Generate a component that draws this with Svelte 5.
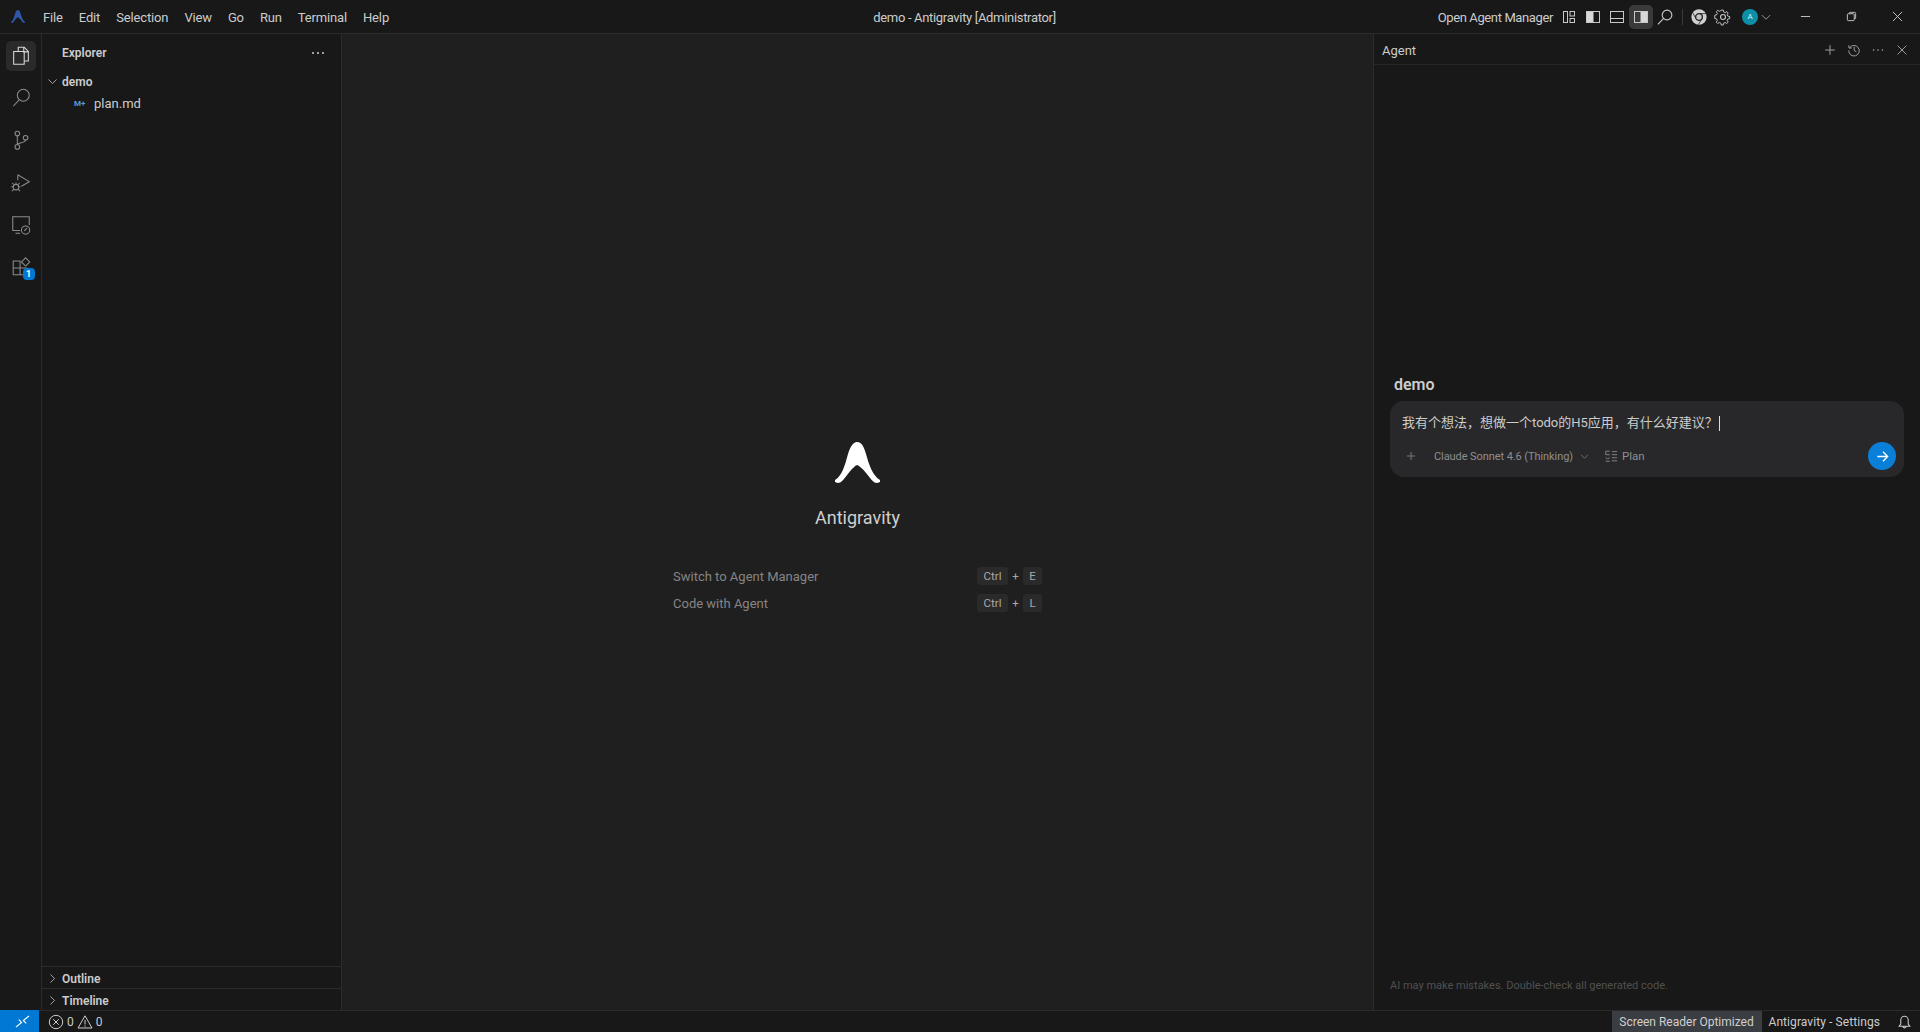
<script lang="ts">
    const menus = ["File", "Edit", "Selection", "View", "Go", "Run", "Terminal", "Help"];
    const shortcuts = [
        { label: "Switch to Agent Manager", key: "E" },
        { label: "Code with Agent", key: "L" },
    ];
    const logo =
        "M22 0C27 0 29 5 31 12C34 23 38 34 45 38C46 40 44 41 42 41C36 41 31 27 22 23C14 27 9 41 3 41C1 41 -1 40 0 38C7 34 10 23 13 12C15 5 18 0 22 0Z";
</script>

<div class="app">
    <header class="titlebar">
        <svg class="applogo" viewBox="0 0 45 41"><path d={logo} /></svg>
        <nav class="menu">
            {#each menus as m}
                <span>{m}</span>
            {/each}
        </nav>
        <div class="title">demo - Antigravity [Administrator]</div>
        <div class="actions">
            <span class="oam">Open Agent Manager</span>
            <div class="tb-icons">
                <span class="tb"><svg viewBox="0 0 16 16"><rect x="2.500" y="2.500" width="4" height="11" /><rect x="9" y="2.500" width="4.500" height="4.500" /><rect x="9" y="9.500" width="4.500" height="4" /></svg></span>
                <span class="tb"><svg viewBox="0 0 16 16"><rect x="1.500" y="2.500" width="13" height="11" /><rect class="fill" x="2" y="3" width="6.500" height="10" /></svg></span>
                <span class="tb"><svg viewBox="0 0 16 16"><rect x="1.500" y="2.500" width="13" height="11" /><path d="M2 9.500h12" /></svg></span>
                <span class="tb on"><svg viewBox="0 0 16 16"><rect x="1.500" y="2.500" width="13" height="11" /><rect class="fill" x="7.500" y="3" width="6.500" height="10" /></svg></span>
                <span class="tb"><svg class="big" viewBox="0 0 16 16"><circle cx="9.800" cy="6.200" r="4.300" /><path d="M6.800 9.300L1.700 14.600" /></svg></span>
            </div>
            <i class="sep"></i>
            <div class="tb-icons two">
                <span class="tb"><svg class="big" viewBox="0 0 16 16"><circle class="solid" cx="8" cy="8" r="6.800" /><path class="cut" d="M8 5h6.300M5.400 9.500L2.300 4M10.600 9.500L7.400 14.800" /><circle class="hole" cx="8" cy="8" r="3" /></svg></span>
                <span class="tb"><svg class="big" viewBox="0 0 16 16"><circle cx="8" cy="8" r="2.200" /><path d="M6.900 1.500h2.200l.4 2 1.600.7 1.700-1.100 1.500 1.500-1.100 1.700.7 1.600 2 .4v2.200l-2 .4-.7 1.600 1.100 1.700-1.500 1.500-1.700-1.100-1.600.7-.4 2H6.900l-.4-2-1.600-.7-1.700 1.100-1.500-1.500 1.100-1.700-.7-1.600-2-.4V6.900l2-.4.7-1.600L1.700 3.200 3.200 1.700l1.700 1.100 1.600-.7z" transform="translate(.6 .6) scale(.84)" /></svg></span>
            </div>
            <span class="avatar">A</span>
            <svg class="chev" viewBox="0 0 16 16"><path d="M2.500 5.500L8 11l5.500-5.500" /></svg>
            <div class="win">
                <span><svg viewBox="0 0 12 12"><path d="M1 6h10" /></svg></span>
                <span><svg viewBox="0 0 12 12"><rect x="1.500" y="3" width="7.500" height="7.500" rx="1" /><path d="M3.500 3V2.500a1 1 0 0 1 1-1h5a1 1 0 0 1 1 1v5a1 1 0 0 1-1 1H9" /></svg></span>
                <span><svg viewBox="0 0 12 12"><path d="M1 1l10 10M11 1L1 11" /></svg></span>
            </div>
        </div>
    </header>

    <div class="body">
        <aside class="activity">
            <span class="act active"><svg viewBox="0 0 24 24"><path d="M9 6.500V2.500h6.500L20 7v10.500h-4.500" /><path d="M15 2.500V7.500h5" /><path d="M4 7h11.500v14H4z" /></svg></span>
            <span class="act"><svg viewBox="0 0 24 24"><circle cx="14.500" cy="9" r="6.500" /><path d="M10 14L3.500 21" /></svg></span>
            <span class="act"><svg viewBox="0 0 24 24"><circle cx="8" cy="5" r="2.500" /><circle cx="8" cy="19.500" r="2.500" /><circle cx="17" cy="9.500" r="2.500" /><path d="M8 7.500V17M17 12c0 3-6 2.500-9 4.500" /></svg></span>
            <span class="act"><svg viewBox="0 0 24 24"><path d="M8.500 3L21 10.500 12.500 15.500M8.500 3V9" /><circle cx="6.500" cy="16.500" r="3" /><path d="M6.500 13.500v-2M3.500 16H1.500M11.500 16h-2M4 19l-2 2M9 19l2 2M4 13.500L2.500 12M9 13.500L10.500 12" /></svg></span>
            <span class="act"><svg viewBox="0 0 24 24"><path d="M11 18H3V3h18v9" /><path d="M6 21h5" /><circle cx="17" cy="17.500" r="4.500" /><path d="M15.500 18.500L18.500 15.500" /></svg></span>
            <span class="act ext">
                <svg viewBox="0 0 24 24"><path d="M3.500 5.500h7.500v7.500H3.500zM3.500 13h7.500v7.500H3.500zM11 13h7.500v7.500H11z" /><path d="M17 2l4.500 4.500L17 11l-4.500-4.500z" /></svg>
                <b class="badge">1</b>
            </span>
        </aside>

        <aside class="sidebar">
            <div class="sb-head">
                <span>Explorer</span>
                <svg class="dots" viewBox="0 0 14 4"><circle cx="2" cy="2" r="1" /><circle cx="7" cy="2" r="1" /><circle cx="12" cy="2" r="1" /></svg>
            </div>
            <div class="tree">
                <div class="row folder">
                    <svg class="tw" viewBox="0 0 16 16"><path d="M3 5.500L8 10.500l5-5" /></svg>
                    demo
                </div>
                <div class="row file">
                    <span class="md">M+</span>
                    plan.md
                </div>
            </div>
            <div class="section">
                <svg class="tw" viewBox="0 0 16 16"><path d="M5.500 3L10.500 8l-5 5" /></svg>
                Outline
            </div>
            <div class="section">
                <svg class="tw" viewBox="0 0 16 16"><path d="M5.500 3L10.500 8l-5 5" /></svg>
                Timeline
            </div>
        </aside>

        <main class="editor">
            <svg class="biglogo" viewBox="0 0 45 41"><path d={logo} /></svg>
            <div class="brand">Antigravity</div>
            <div class="keys">
                {#each shortcuts as s}
                    <div class="shortcut">
                        <span>{s.label}</span>
                        <span class="combo"><kbd>Ctrl</kbd><em>+</em><kbd class="k">{s.key}</kbd></span>
                    </div>
                {/each}
            </div>
        </main>

        <section class="agent">
            <div class="ag-head">
                <span>Agent</span>
                <div class="ag-icons">
                    <svg viewBox="0 0 16 16"><path d="M8 2.500v11M2.500 8h11" /></svg>
                    <svg viewBox="0 0 16 16"><path d="M3 5.500a6 6 0 1 1-1 3M2.200 2.500v3.200h3.200M8.200 4.500V8.500l2.500 1.500" /></svg>
                    <svg viewBox="0 0 16 16"><circle class="dot" cx="3" cy="8" r=".9" /><circle class="dot" cx="8" cy="8" r=".9" /><circle class="dot" cx="13" cy="8" r=".9" /></svg>
                    <svg viewBox="0 0 16 16"><path d="M3 3l10 10M13 3L3 13" /></svg>
                </div>
            </div>
            <div class="ag-body">
                <h2>demo</h2>
                <div class="card">
                    <div class="prompt">我有个想法，想做一个todo的H5应用，有什么好建议？<i class="caret"></i></div>
                    <div class="tools">
                        <svg class="plus" viewBox="0 0 16 16"><path d="M8 2.500v11M2.500 8h11" /></svg>
                        <span class="model">Claude Sonnet 4.6 (Thinking)</span>
                        <svg class="mchev" viewBox="0 0 16 16"><path d="M3 5.500L8 10.500l5-5" /></svg>
                        <svg class="plan" viewBox="0 0 16 16"><path d="M2 2.500h4.500M2 2.500v4h4.500M9 3h6M9 6.500h6M2 9.500l2.200 2.200 2.200-2.200M9 10h6M9 13.500h6M2 14h4.500" /></svg>
                        <span class="plantext">Plan</span>
                        <span class="send"><svg viewBox="0 0 16 16"><path d="M2.500 8h11M8.500 3l5 5-5 5" /></svg></span>
                    </div>
                </div>
                <div class="disclaimer">AI may make mistakes. Double-check all generated code.</div>
            </div>
        </section>
    </div>

    <footer class="status">
        <span class="remote"><svg viewBox="0 0 16 16"><path d="M1 14l6-5-3-3M15 2L9 7l3 3" /></svg></span>
        <span class="problems">
            <svg viewBox="0 0 16 16"><circle cx="8" cy="8" r="6.700" /><path d="M5.200 5.200l5.600 5.600M10.800 5.200l-5.600 5.600" /></svg>
            0
            <svg viewBox="0 0 16 16"><path d="M8 1.800L15 14H1zM8 6v4.500M8 11.500v1.200" /></svg>
            0
        </span>
        <span class="reader">Screen Reader Optimized</span>
        <span class="settings">Antigravity - Settings</span>
        <svg class="bell" viewBox="0 0 16 16"><path d="M3 12.500h10l-1.500-2V6.500a3.500 3.500 0 0 0-7 0v4zM6.500 12.500a1.500 1.500 0 0 0 3 0" /></svg>
    </footer>
</div>

<style>
    :global(body) {
        margin: 0;
        background: #181818;
    }

    .app {
        width: 1920px;
        height: 1032px;
        display: flex;
        flex-direction: column;
        overflow: hidden;
        background: #181818;
        color: #cccccc;
        font-family: Roboto, "Noto Sans CJK SC", sans-serif;
        font-size: 13px;
    }

    svg {
        fill: none;
        stroke: currentColor;
        stroke-width: 1;
        flex: none;
    }

    /* title bar */
    .titlebar {
        height: 34px;
        flex: none;
        display: flex;
        align-items: center;
        position: relative;
        border-bottom: 1px solid #2b2b2b;
        box-sizing: border-box;
    }

    .applogo {
        width: 14px;
        height: 13px;
        margin-left: 11px;
        stroke: none;
        fill: #2e57ab;
    }

    .menu {
        display: flex;
        gap: 16px;
        margin-left: 18px;
        padding-top: 1px;
        letter-spacing: -0.15px;
    }

    .title {
        position: absolute;
        left: 0;
        right: -9px;
        padding-top: 1px;
        text-align: center;
        letter-spacing: -0.32px;
        pointer-events: none;
    }

    .actions {
        margin-left: auto;
        display: flex;
        align-items: center;
    }

    .oam {
        padding-top: 1px;
        letter-spacing: -0.38px;
    }

    .tb-icons {
        display: flex;
        margin-left: 4px;
    }

    .tb {
        width: 24px;
        height: 24px;
        display: flex;
        align-items: center;
        justify-content: center;
        border-radius: 5px;
        color: #c8c8c8;
    }

    .tb svg {
        width: 16px;
        height: 16px;
    }

    .tb svg.big {
        width: 18px;
        height: 18px;
    }

    .tb.on {
        background: #3a3a3a;
    }

    .tb .fill {
        fill: #d8d8d8;
        stroke: none;
    }

    .tb .solid {
        fill: #d0d0d0;
        stroke: none;
    }

    .tb .hole {
        fill: #c4c4c4;
        stroke: #232323;
        stroke-width: 1.200;
    }

    .tb .cut {
        stroke: #232323;
        stroke-width: 0.700;
    }

    .sep {
        width: 1px;
        height: 16px;
        background: #3a3a3a;
        margin: 0 4px 0 5px;
    }

    .tb-icons.two {
        margin-left: 0;
    }

    .avatar {
        width: 16px;
        height: 16px;
        border-radius: 50%;
        background: #0e8fa8;
        color: #d9f3f7;
        font-size: 8px;
        display: flex;
        align-items: center;
        justify-content: center;
        margin-left: 7px;
    }

    .chev {
        width: 12px;
        height: 12px;
        margin-left: 2px;
        color: #c0c0c0;
    }

    .win {
        display: flex;
        margin-left: 10px;
    }

    .win span {
        width: 46px;
        height: 33px;
        display: flex;
        align-items: center;
        justify-content: center;
    }

    .win svg {
        width: 11px;
        height: 11px;
    }

    /* main area */
    .body {
        flex: 1;
        min-height: 0;
        display: flex;
    }

    .activity {
        width: 42px;
        flex: none;
        box-sizing: border-box;
        border-right: 1px solid #2b2b2b;
        display: flex;
        flex-direction: column;
        align-items: center;
        padding-top: 7px;
        gap: 12.200px;
    }

    .act {
        width: 30px;
        height: 30px;
        display: flex;
        align-items: center;
        justify-content: center;
        color: #8c8c8c;
        border-radius: 5px;
        position: relative;
    }

    .act svg {
        width: 22px;
        height: 22px;
        stroke-width: 1.150;
    }

    .act.active {
        color: #d8d8d8;
        background: #2a2a2a;
    }

    .badge {
        position: absolute;
        right: 1px;
        bottom: 2px;
        width: 12px;
        height: 12px;
        border-radius: 4px;
        background: #0078d4;
        color: #ffffff;
        font-size: 9px;
        line-height: 12px;
        text-align: center;
    }

    .sidebar {
        width: 300px;
        flex: none;
        box-sizing: border-box;
        border-right: 1px solid #2b2b2b;
        display: flex;
        flex-direction: column;
    }

    .sb-head {
        height: 34px;
        flex: none;
        display: flex;
        align-items: center;
        justify-content: space-between;
        padding: 2px 16px 0 20px;
        font-size: 12px;
        font-weight: 600;
    }

    .dots {
        width: 14px;
        height: 4px;
        stroke: none;
        fill: #cccccc;
    }

    .tree {
        flex: 1;
    }

    .row {
        height: 22px;
        display: flex;
        align-items: center;
    }

    .folder {
        padding: 1px 0 0 4px;
        box-sizing: border-box;
        font-size: 12px;
        font-weight: 600;
    }

    .tw {
        width: 13px;
        height: 13px;
        margin-right: 3px;
        color: #c0c0c0;
    }

    .file {
        padding-left: 32px;
    }

    .md {
        width: 20px;
        font-size: 8px;
        font-weight: 700;
        color: #5a9ad8;
    }

    .section {
        height: 22px;
        flex: none;
        box-sizing: border-box;
        border-top: 1px solid #2b2b2b;
        display: flex;
        align-items: center;
        padding: 2px 0 0 4px;
        font-size: 12px;
        font-weight: 600;
    }

    .editor {
        flex: 1;
        min-width: 0;
        background: #1f1f1f;
        display: flex;
        flex-direction: column;
        align-items: center;
        padding-top: 408px;
        box-sizing: border-box;
    }

    .biglogo {
        width: 45px;
        height: 41px;
        stroke: none;
        fill: #ffffff;
    }

    .brand {
        margin-top: 22px;
        font-size: 18px;
        color: #cfcfcf;
        line-height: 26px;
    }

    .keys {
        margin-top: 34px;
        width: 369px;
        display: flex;
        flex-direction: column;
        gap: 5px;
    }

    .shortcut {
        height: 22px;
        display: flex;
        align-items: center;
        justify-content: space-between;
        color: #858585;
    }

    .combo {
        display: flex;
        align-items: center;
        font-size: 11.500px;
        color: #a8a8a8;
    }

    kbd {
        font: inherit;
        height: 18px;
        line-height: 18px;
        width: 31px;
        text-align: center;
        background: #2a2a2a;
        border-radius: 3px;
    }

    kbd.k {
        width: 19px;
    }

    .combo em {
        font-style: normal;
        width: 15px;
        text-align: center;
    }

    /* agent panel */
    .agent {
        flex: none;
        width: 547px;
        box-sizing: border-box;
        border-left: 1px solid #2b2b2b;
        display: flex;
        flex-direction: column;
    }

    .ag-head {
        height: 31px;
        flex: none;
        box-sizing: border-box;
        border-bottom: 1px solid #262626;
        display: flex;
        align-items: center;
        justify-content: space-between;
        padding: 2px 11px 0 8px;
    }

    .ag-icons {
        display: flex;
        gap: 10px;
        color: #b0b0b0;
    }

    .ag-icons svg {
        width: 14px;
        height: 14px;
    }

    .dot {
        fill: currentColor;
        stroke: none;
    }

    .ag-body {
        flex: 1;
        display: flex;
        flex-direction: column;
        padding: 310px 16px 18px 16px;
    }

    h2 {
        margin: 0 0 6px 4px;
        font-size: 16px;
        font-weight: 600;
        line-height: 20px;
        color: #cccccc;
    }

    .card {
        height: 76px;
        box-sizing: border-box;
        background: #28282a;
        border-radius: 14px;
        padding: 12px 8px 7px 12px;
        display: flex;
        flex-direction: column;
        justify-content: space-between;
    }

    .prompt {
        font-size: 13px;
        line-height: 20px;
        display: flex;
        align-items: center;
    }

    .caret {
        width: 1px;
        height: 15px;
        background: #dddddd;
        margin-left: 1px;
    }

    .tools {
        display: flex;
        align-items: center;
        color: #8e8e8e;
    }

    .plus {
        width: 12px;
        height: 12px;
        margin-left: 3px;
    }

    .model {
        margin-left: 17px;
        font-size: 11px;
        letter-spacing: -0.08px;
    }

    .mchev {
        width: 11px;
        height: 11px;
        margin-left: 6px;
    }

    .plan {
        width: 14px;
        height: 14px;
        margin-left: 14px;
    }

    .plantext {
        margin-left: 4px;
        font-size: 11.500px;
    }

    .send {
        margin-left: auto;
        width: 28px;
        height: 28px;
        border-radius: 50%;
        background: #0a7fd8;
        color: #ffffff;
        display: flex;
        align-items: center;
        justify-content: center;
    }

    .send svg {
        width: 15px;
        height: 15px;
        stroke-width: 1.400;
    }

    .disclaimer {
        margin-top: auto;
        font-size: 11px;
        color: #505050;
    }

    /* status bar */
    .status {
        height: 22px;
        flex: none;
        box-sizing: border-box;
        border-top: 1px solid #2b2b2b;
        display: flex;
        align-items: stretch;
        font-size: 12px;
    }

    .remote {
        width: 39px;
        margin-top: -1px;
        background: #0078d4;
        color: #ffffff;
        display: flex;
        align-items: center;
        justify-content: flex-end;
        padding-right: 9px;
        box-sizing: border-box;
    }

    .remote svg {
        width: 15px;
        height: 15px;
        stroke-width: 1.300;
    }

    .problems {
        display: flex;
        align-items: center;
        gap: 3px;
        margin-left: 9px;
    }

    .problems svg {
        width: 16px;
        height: 16px;
    }

    .reader {
        margin-left: auto;
        width: 150px;
        background: #3a3d41;
        color: #d0d0d0;
        display: flex;
        align-items: center;
        justify-content: center;
    }

    .settings {
        margin-left: 7px;
        display: flex;
        align-items: center;
        letter-spacing: 0.08px;
    }

    .bell {
        width: 17px;
        height: 17px;
        align-self: center;
        margin: 0 7px 0 16px;
    }
</style>
